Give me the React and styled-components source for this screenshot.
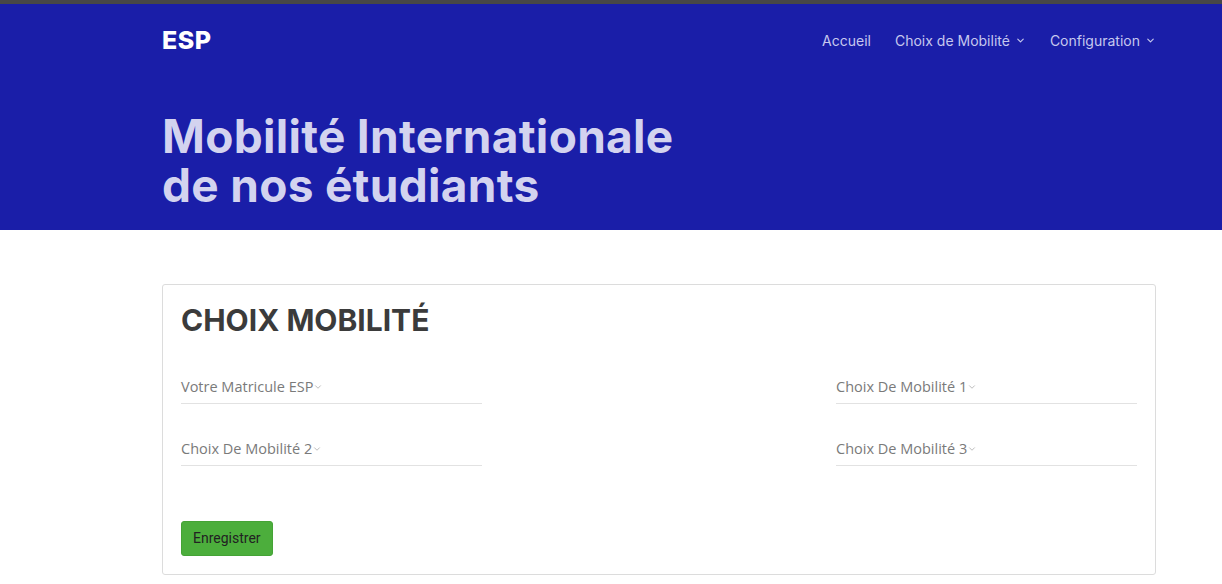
import React from "react";
import styled, { createGlobalStyle } from "styled-components";

const GlobalStyle = createGlobalStyle`
  body {
    margin: 0;
    background: #fff;
    font-family: "Open Sans", sans-serif;
  }
`;

const TopStrip = styled.div`
  height: 4px;
  background-color: #474747;
`;

const Hero = styled.header`
  background-color: #1a1ea8;
  height: 226px;
`;

const Container = styled.div`
  width: 994px;
  margin-left: 162px;
`;

const NavBar = styled.nav`
  display: flex;
  justify-content: space-between;
  align-items: center;
  height: 72px;
`;

const Brand = styled.div`
  font-family: Inter, sans-serif;
  font-weight: 800;
  font-size: 25px;
  color: #fff;
  letter-spacing: 0.5px;
`;

const NavLinks = styled.ul`
  display: flex;
  align-items: center;
  gap: 24px;
  list-style: none;
  margin: 0;
  padding: 0;
`;

const NavItem = styled.li`
  display: flex;
  align-items: center;
  gap: 5px;
  font-family: Inter, sans-serif;
  font-size: 14px;
  color: #c6c8ee;
  svg {
    width: 11px;
    height: 11px;
  }
`;

const Title = styled.h1`
  margin: 36px 0 0;
  font-family: Inter, sans-serif;
  font-weight: 700;
  font-size: 46px;
  line-height: 49px;
  color: #d3d3ef;
  letter-spacing: 0.3px;
  span {
    display: block;
  }
`;

const Main = styled.main`
  padding-top: 54px;
`;

const Card = styled.section`
  border: 1px solid #dcdcdc;
  border-radius: 3px;
  padding: 17px 18px 18px;
`;

const CardTitle = styled.h2`
  margin: 0 0 30px;
  font-family: Inter, sans-serif;
  font-weight: 700;
  font-size: 30px;
  color: #3b3b3b;
`;

const FieldGrid = styled.div`
  display: grid;
  grid-template-columns: 301px 301px;
  justify-content: space-between;
  row-gap: 26px;
`;

const Field = styled.div`
  display: flex;
  align-items: center;
  padding: 9px 0 7px;
  border-bottom: 1px solid #e2e2e2;
  font-size: 14.5px;
  color: #7a7a7a;
  svg {
    width: 10px;
    height: 10px;
    color: #b0b0b0;
  }
`;

const SaveButton = styled.button`
  margin-top: 55px;
  background-color: #4cae3c;
  border: 1px solid #45a336;
  border-radius: 3px;
  padding: 8px 11px 9px;
  font-family: Roboto, sans-serif;
  font-size: 14px;
  color: #222;
`;

const Chevron = ({ stroke = 2.5 }) => (
  <svg viewBox="0 0 24 24" fill="none" stroke="currentColor" strokeWidth={stroke} strokeLinecap="round" strokeLinejoin="round">
    <polyline points="6 9 12 15 18 9" />
  </svg>
);

const fields = [
  "Votre Matricule ESP",
  "Choix De Mobilité 1",
  "Choix De Mobilité 2",
  "Choix De Mobilité 3",
];

export default function App() {
  return (
    <>
      <GlobalStyle />
      <TopStrip />
      <Hero>
        <Container>
          <NavBar>
            <Brand>ESP</Brand>
            <NavLinks>
              <NavItem>Accueil</NavItem>
              <NavItem>
                Choix de Mobilité <Chevron />
              </NavItem>
              <NavItem>
                Configuration <Chevron />
              </NavItem>
            </NavLinks>
          </NavBar>
          <Title>
            <span>Mobilité Internationale</span>
            <span>de nos étudiants</span>
          </Title>
        </Container>
      </Hero>
      <Main>
        <Container>
          <Card>
            <CardTitle>CHOIX MOBILITÉ</CardTitle>
            <FieldGrid>
              {fields.map((f) => (
                <Field key={f}>
                  {f}
                  <Chevron stroke={2} />
                </Field>
              ))}
            </FieldGrid>
            <SaveButton>Enregistrer</SaveButton>
          </Card>
        </Container>
      </Main>
    </>
  );
}
